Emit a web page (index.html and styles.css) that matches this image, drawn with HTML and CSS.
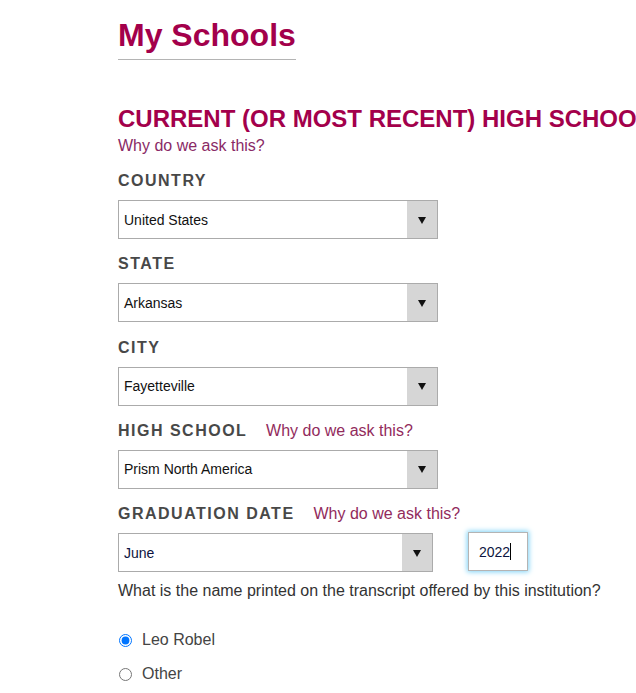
FILE: index.html
```html
<!DOCTYPE html>
<html lang="en">
<head>
<meta charset="utf-8">
<title>My Schools</title>
<link rel="stylesheet" href="styles.css">
</head>
<body>
<main class="page">
  <h1 class="title">My Schools</h1>
  <section class="school">
    <h2 class="section-title">CURRENT (OR MOST RECENT) HIGH SCHOOL</h2>
    <a class="why why-block" href="#">Why do we ask this?</a>

    <div class="field">
      <div class="label">COUNTRY</div>
      <div class="select"><span class="value">United States</span><span class="arrow-box"><span class="arrow"></span></span></div>
    </div>

    <div class="field">
      <div class="label">STATE</div>
      <div class="select"><span class="value">Arkansas</span><span class="arrow-box"><span class="arrow"></span></span></div>
    </div>

    <div class="field">
      <div class="label">CITY</div>
      <div class="select"><span class="value">Fayetteville</span><span class="arrow-box"><span class="arrow"></span></span></div>
    </div>

    <div class="field">
      <div class="label">HIGH SCHOOL <a class="why" href="#">Why do we ask this?</a></div>
      <div class="select"><span class="value">Prism North America</span><span class="arrow-box"><span class="arrow"></span></span></div>
    </div>

    <div class="field last">
      <div class="label">GRADUATION DATE <a class="why" href="#">Why do we ask this?</a></div>
      <div class="date-row">
        <div class="select month"><span class="value dark">June</span><span class="arrow-box"><span class="arrow"></span></span></div>
        <div class="year"><span class="year-text">2022</span><span class="caret"></span></div>
      </div>
    </div>

    <p class="question">What is the name printed on the transcript offered by this institution?</p>

    <div class="options">
      <label class="option"><input type="radio" name="transcript" checked><span>Leo Robel</span></label>
      <label class="option"><input type="radio" name="transcript"><span>Other</span></label>
    </div>
  </section>
</main>
</body>
</html>
```

FILE: styles.css
```css
html, body {
  margin: 0;
  padding: 0;
  background: #ffffff;
  overflow: hidden;
}

body {
  font-family: "Liberation Sans", Arial, sans-serif;
  color: #333333;
}

.page {
  padding-left: 118px;
}

.title {
  width: fit-content;
  margin: 17px 0 0;
  padding-bottom: 5px;
  border-bottom: 1px solid #b4b4b4;
  font-size: 32px;
  line-height: 37px;
  font-weight: bold;
  color: #a3004b;
}

.section-title {
  margin: 45px 0 0;
  font-size: 24px;
  line-height: 28px;
  font-weight: bold;
  color: #a3004b;
  white-space: nowrap;
}

.why {
  font-size: 16px;
  font-weight: normal;
  letter-spacing: 0;
  color: #922b5c;
  text-decoration: none;
}

.why-block {
  display: block;
  margin-top: 4px;
  line-height: 18px;
  color: #8a2a66;
}

.field {
  margin-top: 16px;
}

.field + .field {
  margin-top: 15.33px;
}

.label {
  font-size: 16px;
  line-height: 20px;
  font-weight: bold;
  letter-spacing: 1.5px;
  color: #484848;
  margin-bottom: 9px;
}

.label .why {
  margin-left: 13px;
}

.select {
  display: flex;
  width: 318px;
  height: 37px;
  border: 1px solid #ababab;
  background: #ffffff;
}

.select .value {
  flex: 1;
  display: flex;
  align-items: center;
  padding-left: 5px;
  font-size: 14px;
  color: #111111;
}

.select .value.dark {
  color: #0d1440;
}

.arrow-box {
  width: 30px;
  background: #d6d6d6;
  display: flex;
  align-items: center;
  justify-content: center;
}

.arrow {
  width: 0;
  height: 0;
  border-left: 4px solid transparent;
  border-right: 4px solid transparent;
  border-top: 7px solid #111111;
  margin-top: 1px;
}

.date-row {
  display: flex;
  align-items: flex-start;
  gap: 35px;
}

.select.month {
  width: 313px;
}

.year {
  display: flex;
  align-items: center;
  width: 48px;
  height: 37px;
  margin-top: -1px;
  padding-left: 10px;
  border: 1px solid #b4b4b4;
  box-shadow: 0 0 5px 1px #7fd3f7;
  background: #ffffff;
}

.year-text {
  font-size: 14px;
  color: #0d1440;
}

.caret {
  width: 1px;
  height: 17px;
  background: #000000;
}

.question {
  margin: 9px 0 0;
  font-size: 16px;
  line-height: 20px;
  color: #333333;
}

.options {
  margin-top: 22px;
  display: flex;
  flex-direction: column;
}

.option {
  display: flex;
  align-items: center;
  height: 34px;
  font-size: 16px;
  color: #444444;
}

.option input {
  width: 13px;
  height: 13px;
  margin: 0 10px 0 1px;
}
```
